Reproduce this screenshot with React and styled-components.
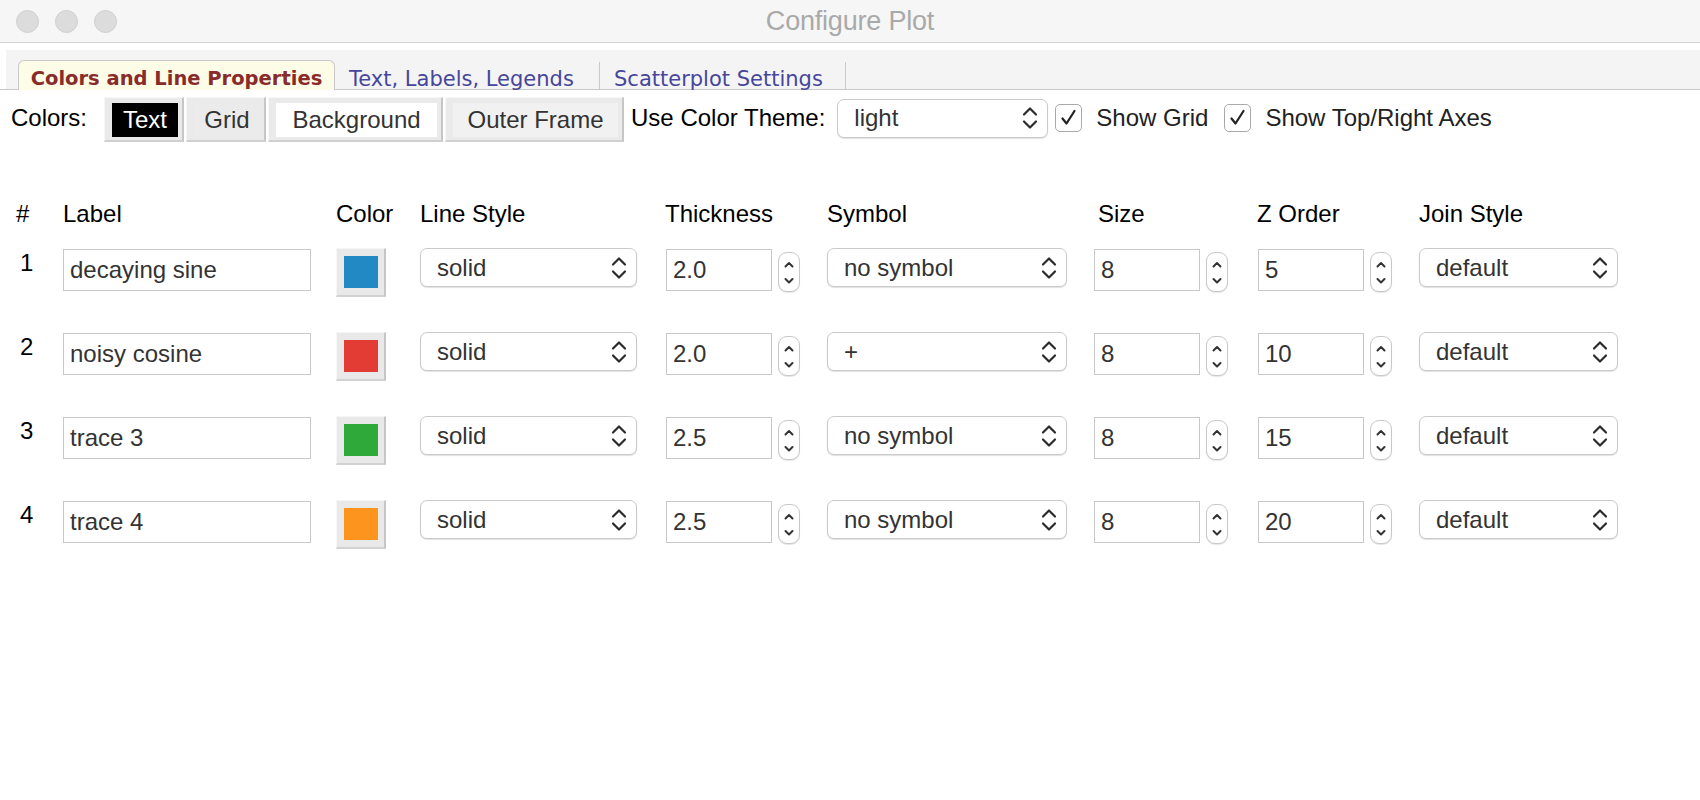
import React from 'react';
import styled, { createGlobalStyle } from 'styled-components';

const GlobalStyle = createGlobalStyle`
    html, body {
        margin: 0;
        padding: 0;
        background: #ffffff;
    }
    body {
        font-family: "Liberation Sans", Arial, sans-serif;
    }
`;

const traces = [
    { id: 1, label: 'decaying sine', color: '#2389c5', style: 'solid', thickness: '2.0', symbol: 'no symbol', size: '8', z: '5', join: 'default' },
    { id: 2, label: 'noisy cosine', color: '#e23c34', style: 'solid', thickness: '2.0', symbol: '+', size: '8', z: '10', join: 'default' },
    { id: 3, label: 'trace 3', color: '#2ea93a', style: 'solid', thickness: '2.5', symbol: 'no symbol', size: '8', z: '15', join: 'default' },
    { id: 4, label: 'trace 4', color: '#fc941e', style: 'solid', thickness: '2.5', symbol: 'no symbol', size: '8', z: '20', join: 'default' },
];

const colorButtons = [
    { name: 'Text', bg: '#000000', fg: '#ffffff', width: 80 },
    { name: 'Grid', bg: '#ebebeb', fg: '#333333', width: 80 },
    { name: 'Background', bg: '#ffffff', fg: '#333333', width: 175 },
    { name: 'Outer Frame', bg: '#f1f1f1', fg: '#333333', width: 179 },
];

function Chevrons() {
    return (
        <svg width="16" height="26" viewBox="0 0 16 26">
            <path d="M2 9.5 L8 3.5 L14 9.5" fill="none" stroke="#2b2b2b" strokeWidth="2.2" strokeLinecap="round" strokeLinejoin="round" />
            <path d="M2 16.5 L8 22.5 L14 16.5" fill="none" stroke="#2b2b2b" strokeWidth="2.2" strokeLinecap="round" strokeLinejoin="round" />
        </svg>
    );
}

function Select({ value, width }) {
    return (
        <SelectBox width={width}>
            <span>{value}</span>
            <Chevrons />
        </SelectBox>
    );
}

function NumberField({ value }) {
    return (
        <NumberWrap>
            <TextBox width={106}>{value}</TextBox>
            <Spinner>
                <svg width="12" height="38" viewBox="0 0 12 38">
                    <path d="M2.5 13.5 L6 10 L9.5 13.5" fill="none" stroke="#333" strokeWidth="2" strokeLinecap="round" strokeLinejoin="round" />
                    <path d="M2.5 26 L6 29.5 L9.5 26" fill="none" stroke="#333" strokeWidth="2" strokeLinecap="round" strokeLinejoin="round" />
                </svg>
            </Spinner>
        </NumberWrap>
    );
}

function Check({ label, first }) {
    return (
        <CheckItem first={first}>
            <CheckBox>
                <svg width="27" height="28" viewBox="0 0 27 28">
                    <path d="M7.5 14.5 L11.5 19.5 L19.5 7" fill="none" stroke="#222" strokeWidth="2.2" strokeLinecap="round" strokeLinejoin="round" />
                </svg>
            </CheckBox>
            <span>{label}</span>
        </CheckItem>
    );
}

function App() {
    return (
        <Window>
            <GlobalStyle />
            <TitleBar>
                <Lights>
                    <Light />
                    <Light />
                    <Light />
                </Lights>
                <Title>Configure Plot</Title>
                <div />
            </TitleBar>
            <TabBar>
                <TabShelf>
                    <Tab active>Colors and Line Properties</Tab>
                    <Tab width={265}>Text, Labels, Legends</Tab>
                    <Tab width={246}>Scatterplot Settings</Tab>
                </TabShelf>
            </TabBar>
            <Toolbar>
                <ToolLabel>Colors:</ToolLabel>
                <ButtonGroup>
                    {colorButtons.map(b => (
                        <BevelButton key={b.name} width={b.width}>
                            <ButtonFace bg={b.bg} fg={b.fg}>{b.name}</ButtonFace>
                        </BevelButton>
                    ))}
                </ButtonGroup>
                <ThemeLabel>Use Color Theme:</ThemeLabel>
                <Select value="light" width={211} />
                <Check label="Show Grid" first />
                <Check label="Show Top/Right Axes" />
            </Toolbar>
            <Table>
                <Head>#</Head>
                <Head>Label</Head>
                <Head>Color</Head>
                <Head>Line Style</Head>
                <Head>Thickness</Head>
                <Head>Symbol</Head>
                <Head indent={5}>Size</Head>
                <Head>Z Order</Head>
                <Head>Join Style</Head>
                {traces.map(t => (
                    <React.Fragment key={t.id}>
                        <RowNum>{t.id}</RowNum>
                        <TextBox width={248}>{t.label}</TextBox>
                        <SwatchButton>
                            <Swatch style={{ background: t.color }} />
                        </SwatchButton>
                        <Select value={t.style} width={217} />
                        <NumberField value={t.thickness} />
                        <Select value={t.symbol} width={240} />
                        <NumberField value={t.size} />
                        <NumberField value={t.z} />
                        <Select value={t.join} width={199} />
                    </React.Fragment>
                ))}
            </Table>
        </Window>
    );
}

export default App;

const Window = styled.div`
    width: 1700px;
    height: 800px;
    background: #ffffff;
    overflow: hidden;
    color: #000;
`
const TitleBar = styled.div`
    height: 42px;
    display: grid;
    grid-template-columns: 1fr auto 1fr;
    align-items: center;
    background: #f6f6f6;
    border-bottom: 1px solid #d3d3d3;
`
const Lights = styled.div`
    display: flex;
    gap: 16px;
    padding-left: 16px;
`
const Light = styled.div`
    width: 23px;
    height: 23px;
    border-radius: 50%;
    background: #dcdcdc;
    border: 1px solid #d0d0d0;
    box-sizing: border-box;
`
const Title = styled.div`
    font-size: 27px;
    color: #a9a9a9;
    letter-spacing: -0.2px;
`
const TabBar = styled.div`
    padding-top: 7px;
    border-bottom: 1px solid #c9c9c9;
`
const TabShelf = styled.div`
    margin-left: 6px;
    height: 39px;
    padding-left: 12px;
    background: #f4f4f4;
    display: flex;
    align-items: flex-end;
`
const Tab = styled.div`
    box-sizing: border-box;
    height: ${props => props.active ? '30px' : '27px'};
    width: ${props => props.active ? '317px' : `${props.width}px`};
    display: flex;
    align-items: flex-end;
    justify-content: ${props => props.active ? 'center' : 'flex-start'};
    padding-left: ${props => props.active ? '0' : '14px'};
    font-family: "DejaVu Sans", "Liberation Sans", sans-serif;
    font-size: ${props => props.active ? '19.5px' : '21px'};
    font-weight: ${props => props.active ? 'bold' : 'normal'};
    line-height: 20px;
    color: ${props => props.active ? '#8a2b2b' : '#46469c'};
    white-space: nowrap;
    background: ${props => props.active ? '#fcfce7' : 'transparent'};
    border: ${props => props.active ? '1px solid #c9c9c9' : 'none'};
    border-bottom: none;
    border-right: 1px solid #c9c9c9;
    border-radius: ${props => props.active ? '6px 6px 0 0' : '0'};
    margin-bottom: ${props => props.active ? '-1px' : '0'};
    padding-bottom: ${props => props.active ? '1px' : '0'};
`
const Toolbar = styled.div`
    height: 56px;
    display: flex;
    align-items: center;
    padding-left: 11px;
    font-size: 24px;
`
const ToolLabel = styled.span`
    margin-right: 17px;
`
const ButtonGroup = styled.div`
    display: flex;
    gap: 2px;
`
const BevelButton = styled.div`
    box-sizing: border-box;
    width: ${props => props.width}px;
    height: 45px;
    margin-top: 2px;
    padding: 5px 4px 3px 7px;
    background: #eaeaea;
    border-top: 1px solid #f7f7f7;
    border-left: 1px solid #f7f7f7;
    border-right: 2px solid #c6c6c6;
    border-bottom: 2px solid #d0d0d0;
    display: flex;
`
const ButtonFace = styled.div`
    flex: 1;
    display: flex;
    align-items: center;
    justify-content: center;
    background: ${props => props.bg};
    color: ${props => props.fg};
    font-size: 24px;
`
const ThemeLabel = styled.span`
    margin-left: 7px;
    margin-right: 12px;
`
const SelectBox = styled.div`
    box-sizing: border-box;
    width: ${props => props.width}px;
    height: 39px;
    display: flex;
    align-items: center;
    justify-content: space-between;
    padding: 0 9px 0 16px;
    background: #ffffff;
    border: 1px solid #cacaca;
    border-radius: 7px;
    box-shadow: 0 1px 1px rgba(0, 0, 0, 0.12);
    font-size: 24px;
    color: #333;
    svg {
        flex-shrink: 0;
    }
`
const CheckItem = styled.div`
    display: flex;
    align-items: center;
    gap: 14px;
    margin-left: ${props => props.first ? '7px' : '16px'};
    color: #222;
`
const CheckBox = styled.div`
    box-sizing: border-box;
    width: 27px;
    height: 28px;
    border: 1px solid #a9a9a9;
    border-radius: 5px;
    background: #fff;
    display: flex;
    svg {
        margin: -1px;
    }
`
const Table = styled.div`
    display: grid;
    grid-template-columns: 47px 273px 84px 245px 162px 266px 164px 162px 201px;
    grid-template-rows: 48px repeat(4, 84px);
    align-items: start;
    margin-top: 54px;
    padding-left: 16px;
    font-size: 24px;
`
const Head = styled.div`
    line-height: 28px;
    padding-left: ${props => props.indent || 0}px;
    color: #000;
`
const RowNum = styled.div`
    line-height: 24px;
    padding-top: 3px;
    padding-left: 4px;
    color: #000;
`
const TextBox = styled.div`
    box-sizing: border-box;
    width: ${props => props.width}px;
    height: 42px;
    margin-top: 1px;
    display: flex;
    align-items: center;
    padding-left: 6px;
    border: 1px solid #c9c9c9;
    background: #fff;
    color: #333;
    font-size: 24px;
`
const NumberWrap = styled.div`
    display: flex;
    align-items: flex-start;
    gap: 6px;
    margin-left: 1px;
`
const Spinner = styled.div`
    box-sizing: border-box;
    width: 22px;
    height: 40px;
    margin-top: 4px;
    border: 1px solid #c8c8c8;
    border-radius: 9px;
    background: #fff;
    box-shadow: 0 1px 1px rgba(0, 0, 0, 0.1);
    display: flex;
    justify-content: center;
`
const SwatchButton = styled.div`
    box-sizing: border-box;
    width: 50px;
    height: 49px;
    padding: 7px 6px 7px 7px;
    background: #e9e9e9;
    border-top: 1px solid #f6f6f6;
    border-left: 1px solid #f6f6f6;
    border-right: 2px solid #c6c6c6;
    border-bottom: 2px solid #d2d2d2;
`
const Swatch = styled.div`
    width: 100%;
    height: 100%;
`
